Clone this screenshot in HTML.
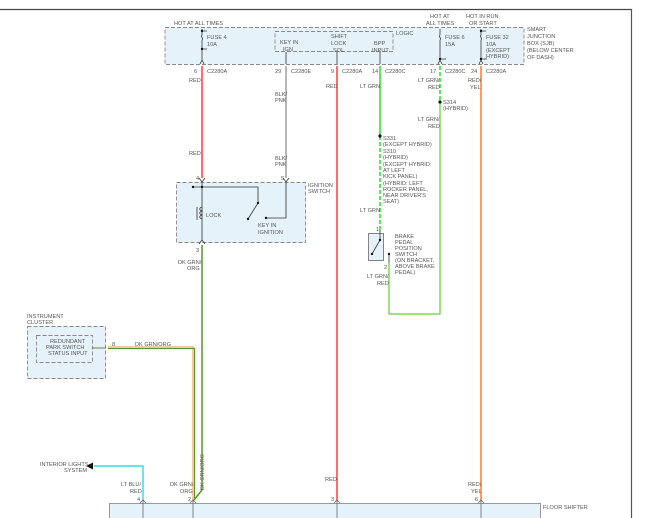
<!DOCTYPE html>
<html><head><meta charset="utf-8"><style>
html,body{margin:0;padding:0;background:#fff;width:650px;height:518px;overflow:hidden}
svg text{font-family:"Liberation Sans",sans-serif;font-size:5.6px;fill:#555}
</style></head><body>
<svg width="650" height="518" viewBox="0 0 650 518" xmlns="http://www.w3.org/2000/svg">
<line x1="0" y1="9.5" x2="632" y2="9.5" stroke="#444" stroke-width="1.2"/>
<line x1="631.5" y1="9" x2="631.5" y2="518" stroke="#555" stroke-width="1.2"/>

<rect x="165" y="27.5" width="359" height="37" fill="#e6f2fa" stroke="#888" stroke-dasharray="4,2" stroke-width="0.9"/>
<rect x="275" y="31.5" width="118" height="20" fill="none" stroke="#888" stroke-dasharray="4,2" stroke-width="0.9"/>
<text x="174" y="25">HOT AT ALL TIMES</text>
<text x="396" y="35">LOGIC</text>
<text x="280" y="44">KEY IN</text><text x="283" y="51">IGN</text>
<text x="331" y="38">SHIFT</text><text x="331" y="45">LOCK</text><text x="333" y="52">SOL</text>
<text x="374" y="45">BPP</text><text x="372" y="52">INPUT</text>
<text x="430" y="18">HOT AT</text><text x="426" y="25">ALL TIMES</text>
<text x="466" y="18">HOT IN RUN</text><text x="469" y="25">OR START</text>
<text x="527" y="31">SMART</text><text x="527" y="38">JUNCTION</text><text x="527" y="45">BOX (SJB)</text><text x="527" y="52">(BELOW CENTER</text><text x="527" y="59">OF DASH)</text>
<text x="207" y="39">FUSE 4</text><text x="207" y="46">10A</text>
<text x="445" y="39">FUSE 6</text><text x="445" y="46">15A</text>
<text x="486" y="39">FUSE 32</text><text x="486" y="46">10A</text><text x="486" y="52">(EXCEPT</text><text x="486" y="58">HYBRID)</text>
<g stroke="#333" stroke-width="0.8" fill="none">
<path d="M202 29v6 M202 35c-2 2 2 3 0 5 M202 40v8 M202 48v12 M202 60l-2 4 M202 60l2 4"/>
<path d="M202 31h5 M202 49h5"/>
<path d="M440 29v6 M440 35c-2 2 2 3 0 5 M440 40v20 M440 60l-2 4 M440 60l2 4 M440 59h6"/>
<path d="M481 29v6 M481 35c-2 2 2 3 0 5 M481 40v20 M481 60l-2 4 M481 60l2 4 M481 31h5 M481 59h6"/>
<path d="M286 52v12 M337 52v12 M380 52v12"/>
</g>
<g fill="#111"><circle cx="202" cy="31" r="1.2"/><circle cx="202" cy="49" r="1.2"/><circle cx="440" cy="59" r="1.2"/><circle cx="481" cy="31" r="1.2"/><circle cx="481" cy="59" r="1.2"/></g>

<text x="194" y="73">6</text><text x="207" y="73">C2280A</text>
<text x="275" y="73">29</text><text x="291" y="73">C2280E</text>
<text x="331" y="73">9</text><text x="342" y="73">C2280A</text>
<text x="372" y="73">14</text><text x="385" y="73">C2280C</text>
<text x="430" y="73">17</text><text x="445" y="73">C2280C</text>
<text x="471" y="73">24</text><text x="486" y="73">C2280A</text>

<line x1="202" y1="66" x2="202" y2="178" stroke="#ff3b3b" stroke-width="1.5"/>
<line x1="286" y1="66" x2="286" y2="178" stroke="#a0a0a0" stroke-width="1.5"/>
<line x1="337" y1="66" x2="337" y2="500" stroke="#ff3b3b" stroke-width="1.5"/>
<line x1="481" y1="66" x2="481" y2="500" stroke="#ff7a30" stroke-width="1.5"/>
<line x1="380" y1="66" x2="380" y2="136" stroke="#22e022" stroke-width="1.5"/>
<line x1="380" y1="136" x2="380" y2="230" stroke="#22e022" stroke-width="1.5" stroke-dasharray="4,2"/>
<line x1="440" y1="66" x2="440" y2="102" stroke="#22e022" stroke-width="1.5" stroke-dasharray="4,2"/>
<polyline points="440,102 440,314 389,314 389,263" fill="none" stroke="#7ed85a" stroke-width="1.5"/>
<line x1="202" y1="245" x2="202" y2="490" stroke="#4e9a20" stroke-width="1.5"/>
<line x1="202" y1="490" x2="194" y2="500" stroke="#4e9a20" stroke-width="1.5"/>
<polyline points="108,347 193,347 193,500" fill="none" stroke="#e89040" stroke-width="1"/>
<polyline points="108,348.5 194.5,348.5 194.5,498" fill="none" stroke="#4e9a20" stroke-width="1"/>
<polyline points="94,466 143,466 143,500" fill="none" stroke="#40d8ea" stroke-width="1.5"/>
<path d="M86 466l7-3.5v7z" fill="#111"/>

<text x="189" y="82">RED</text><text x="189" y="155">RED</text>
<text x="275" y="96">BLK/</text><text x="275" y="102">PNK</text>
<text x="275" y="160">BLK/</text><text x="275" y="166">PNK</text>
<text x="326" y="88">RED</text>
<text x="360" y="88">LT GRN</text>
<text x="418" y="82">LT GRN/</text><text x="428" y="89">RED</text>
<text x="468" y="82">RED/</text><text x="470" y="89">YEL</text>
<text x="443" y="104">S314</text><text x="443" y="110">(HYBRID)</text>
<text x="418" y="121">LT GRN/</text><text x="428" y="128">RED</text>
<text x="383" y="140">S331</text><text x="383" y="146">(EXCEPT HYBRID)</text>
<text x="383" y="153">S310</text><text x="383" y="159">(HYBRID)</text>
<text x="383" y="166">(EXCEPT HYBRID:</text><text x="383" y="172">AT LEFT</text><text x="383" y="178">KICK PANEL)</text>
<text x="383" y="185">(HYBRID: LEFT</text><text x="383" y="191">ROCKER PANEL,</text><text x="383" y="197">NEAR DRIVER'S</text><text x="383" y="203">SEAT)</text>
<text x="360" y="212">LT GRN</text>
<g fill="#111"><circle cx="380" cy="136" r="1.6"/><circle cx="440" cy="102" r="1.6"/></g>

<rect x="176.5" y="182.5" width="129" height="60" fill="#e6f2fa" stroke="#888" stroke-dasharray="4,2" stroke-width="0.9"/>
<text x="196" y="180">4</text><text x="281" y="180">5</text>
<text x="308" y="187">IGNITION</text><text x="308" y="193">SWITCH</text>
<text x="206" y="217">LOCK</text>
<text x="258" y="227">KEY IN</text><text x="258" y="234">IGNITION</text>
<text x="196" y="252">3</text>
<text x="178" y="264">DK GRN/</text><text x="187" y="270">ORG</text>
<g stroke="#333" stroke-width="0.8" fill="none">
<path d="M199 178l3 4l3-4 M202 182v58 M199 244l3-4l3 4"/>
<path d="M193 187h65v16 M248 219l10-16 M266 218h20v-36 M283 178l3 4l3-4"/>
<path d="M197 207v13 M202 207c-3 1 -3 3 0 4c-3 1-3 3 0 4c-3 1-3 3 0 4"/>
</g>
<g fill="#111"><circle cx="193" cy="187" r="1.2"/><circle cx="202" cy="187" r="1.2"/><circle cx="258" cy="203" r="1.2"/><circle cx="248" cy="219" r="1.2"/><circle cx="266" cy="218" r="1.2"/></g>

<rect x="368.5" y="233.5" width="15" height="27" fill="#e6f2fa" stroke="#777" stroke-width="0.9"/>
<text x="376" y="231">1</text><text x="384" y="269">2</text>
<text x="395" y="238">BRAKE</text><text x="395" y="244">PEDAL</text><text x="395" y="250">POSITION</text><text x="395" y="256">SWITCH</text><text x="395" y="262">(ON BRACKET,</text><text x="395" y="268">ABOVE BRAKE</text><text x="395" y="274">PEDAL)</text>
<text x="367" y="278">LT GRN/</text><text x="377" y="285">RED</text>
<g stroke="#333" stroke-width="0.8" fill="none"><path d="M380 230v10 M372 254l8-14 M389 254v9"/></g>
<g fill="#111"><circle cx="380" cy="240" r="1.2"/><circle cx="372" cy="254" r="1.2"/><circle cx="389" cy="254" r="1.2"/></g>

<text x="27" y="318">INSTRUMENT</text><text x="27" y="324">CLUSTER</text>
<rect x="27.5" y="326.5" width="78" height="52" fill="#e6f2fa" stroke="#888" stroke-dasharray="4,2" stroke-width="0.9"/>
<rect x="36.5" y="335.5" width="56" height="27" fill="none" stroke="#888" stroke-dasharray="4,2" stroke-width="0.9"/>
<text x="50" y="343">REDUNDANT</text><text x="46" y="349">PARK SWITCH</text><text x="48" y="355">STATUS INPUT</text>
<path d="M92 348h14" stroke="#555" stroke-width="0.8"/>
<text x="112" y="346">8</text><text x="135" y="346">DK GRN/ORG</text>

<text x="40" y="466">INTERIOR LIGHTS</text><text x="64" y="472">SYSTEM</text>
<text x="121" y="486">LT BLU/</text><text x="130" y="493">RED</text>
<text x="170" y="486">DK GRN/</text><text x="180" y="493">ORG</text>
<text transform="translate(204,490) rotate(-90)">DK GRN/ORG</text>
<text x="325" y="481">RED</text>
<text x="468" y="486">RED/</text><text x="471" y="493">YEL</text>
<text x="137" y="501">4</text><text x="188" y="501">2</text><text x="331" y="501">3</text><text x="475" y="501">6</text>

<rect x="109.5" y="503.5" width="431" height="20" fill="#e6f2fa" stroke="#999" stroke-width="1"/>
<text x="543" y="509">FLOOR SHIFTER</text>
<g stroke="#666" stroke-width="0.8" fill="none">
<path d="M140 503l3-3l3 3 M143 500v18 M190 503l3-3l3 3 M193 500v18 M334 503l3-3l3 3 M337 500v18 M478 503l3-3l3 3 M481 500v18"/>
</g>
</svg>
</body></html>
